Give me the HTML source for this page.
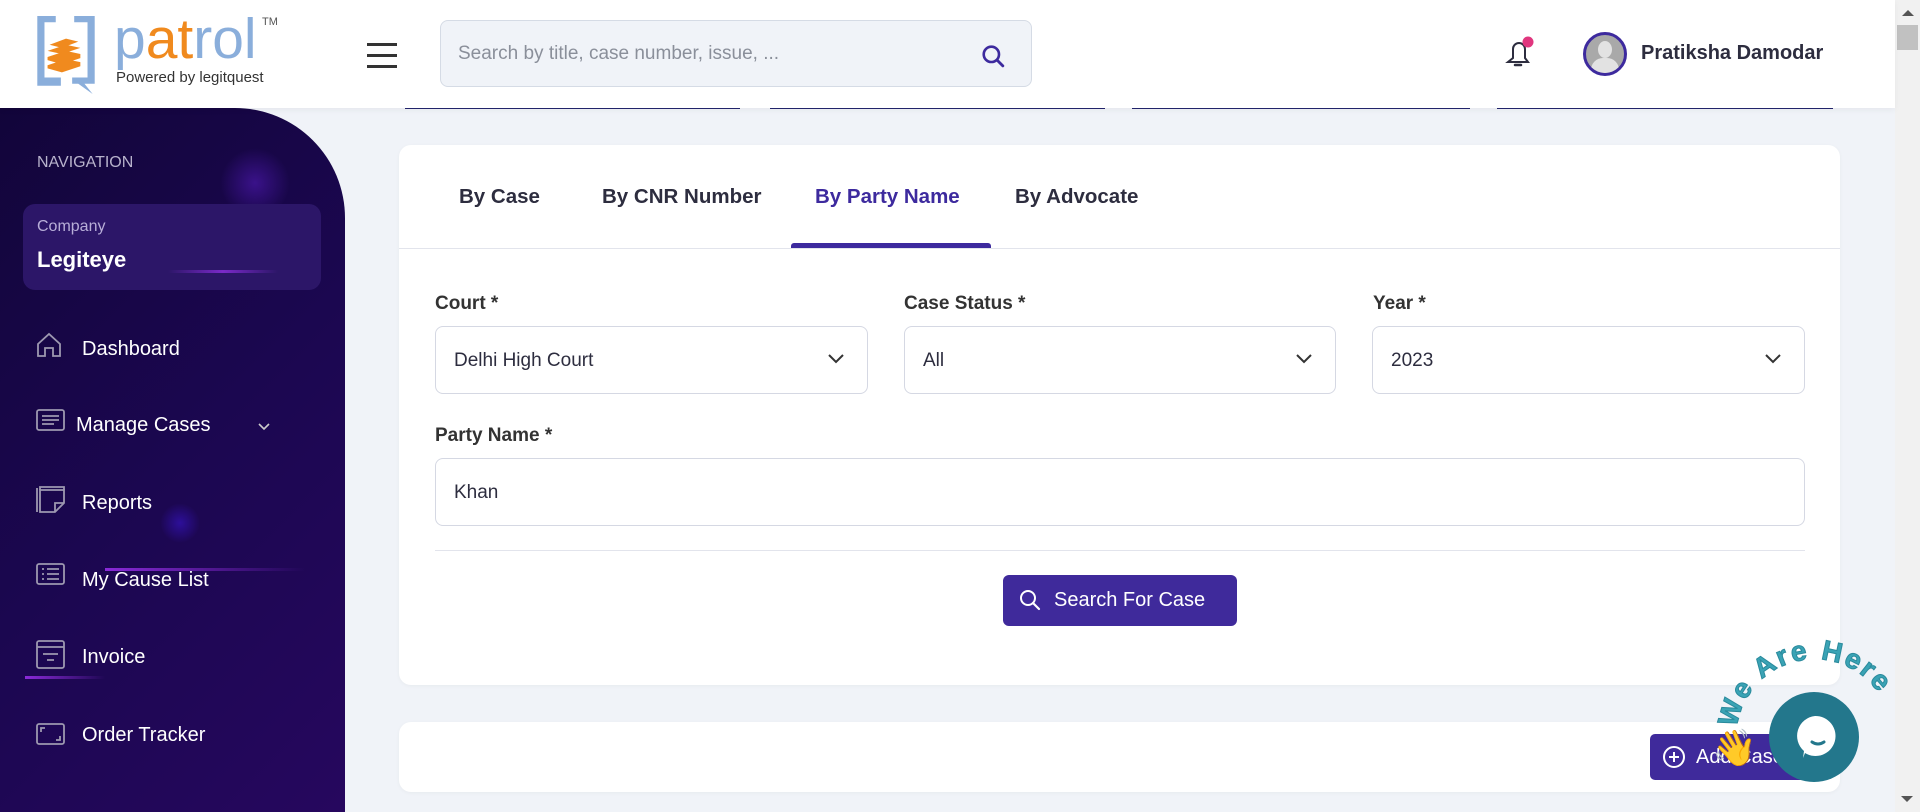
<!DOCTYPE html>
<html><head><meta charset="utf-8">
<style>
*{box-sizing:border-box;margin:0;padding:0}
body{width:1920px;height:812px;overflow:hidden;background:#f0f3f8;font-family:"Liberation Sans",sans-serif;position:relative;color:#2d2d3f}
.abs{position:absolute}
#hdr{left:0;top:0;width:1895px;height:108px;background:#fff;box-shadow:0 2px 6px rgba(0,0,0,.05);z-index:3}
#sb{left:0;top:108px;width:345px;height:704px;border-top-right-radius:110px;background:linear-gradient(135deg,#12053a 0%,#1b0750 50%,#26075e 100%);overflow:hidden}
.nav{position:absolute;left:82px;font-size:20px;color:#fff;font-weight:500}
.ico{position:absolute;left:36px}
.card{position:absolute;background:#fff;border-radius:12px;box-shadow:0 1px 4px rgba(0,0,0,.04)}
.tab{position:absolute;top:185px;font-size:20.5px;font-weight:700;color:#2d2d3f}
.lbl{position:absolute;font-size:19px;font-weight:700;color:#333}
.fld{position:absolute;height:68px;border:1px solid #d5d8e3;border-radius:8px;background:#fff;font-size:19px;color:#2d2d3f;padding:23px 0 0 18px}
.chev{position:absolute;right:22px;top:26px}
</style></head><body>

<div id="hdr" class="abs">
  <svg class="abs" style="left:33px;top:14px" width="66" height="82" viewBox="0 0 60 80">
    <path d="M2 2h18v6H9v54h16v8H2z" fill="#8aaedb"/>
    <path d="M38 2h20v66H48l8 10-14-10H36v-6h15V8H38z" fill="#8aaedb"/>
    <g fill="#f08a1e"><path d="M12 36l18-6 14 3-18 6z"/><path d="M12 42l18-6 14 3v4l-18 6-14-4z"/><path d="M12 50l18-6 14 3v4l-18 6-14-4z"/><path d="M14 30l16-6 12 3-16 6z"/></g>
  </svg>
  <div class="abs" style="left:114px;top:6px;font-size:57px;color:#8aaedb;line-height:66px"><span>p</span><span style="color:#f08a1e">at</span>rol</div>
  <div class="abs" style="left:262px;top:16px;font-size:11px;color:#555">TM</div>
  <div class="abs" style="left:116px;top:69px;font-size:15px;color:#333">Powered by legitquest</div>
  <div class="abs" style="left:367px;top:43px;width:30px;height:3px;background:#333;box-shadow:0 11px 0 #333,0 22px 0 #333"></div>
  <div class="abs" style="left:440px;top:20px;width:592px;height:67px;background:#f0f3f8;border:1px solid #d5dbe5;border-radius:8px">
    <div class="abs" style="left:17px;top:22px;font-size:19px;color:#8a8f9a">Search by title, case number, issue, ...</div>
    <svg class="abs" style="left:540px;top:23px" width="24" height="24" viewBox="0 0 22 22"><circle cx="9.5" cy="9.5" r="7" fill="none" stroke="#3d2a9e" stroke-width="2.4"/><path d="M15 15l5 5" stroke="#3d2a9e" stroke-width="2.6" stroke-linecap="round"/></svg>
  </div>
  <svg class="abs" style="left:1504px;top:36px" width="32" height="34" viewBox="0 0 32 34"><path d="M4 26h20l-3-4v-9a6 6 0 0 0-12 0v9z" fill="none" stroke="#2d2d3f" stroke-width="2"/><path d="M11 29h6" stroke="#2d2d3f" stroke-width="2.5" stroke-linecap="round"/><circle cx="24" cy="6" r="5.5" fill="#e0367e"/></svg>
  <div class="abs" style="left:1583px;top:32px;width:44px;height:44px;border-radius:50%;border:3px solid #3d2a9e;background:#a9a9a9;overflow:hidden">
    <div class="abs" style="left:12px;top:6px;width:14px;height:17px;border-radius:50%;background:#e2e2e2"></div>
    <div class="abs" style="left:5px;top:23px;width:28px;height:20px;border-radius:12px 12px 0 0;background:#e2e2e2"></div>
  </div>
  <div class="abs" style="left:1641px;top:42px;font-size:20px;font-weight:700;color:#2d2d3f">Pratiksha Damodar</div>
</div>
<div class="abs" style="left:1895px;top:0;width:25px;height:812px;background:#f1f1f1"></div>
<div class="abs" style="left:1902px;top:10px;border:6px solid transparent;border-bottom:6px solid #555;border-top:0;width:0;height:0"></div>
<div class="abs" style="left:1897px;top:25px;width:21px;height:25px;background:#c1c1c1"></div>
<div class="abs" style="left:1901px;top:796px;border:6px solid transparent;border-top:6px solid #555;border-bottom:0;width:0;height:0"></div>

<div class="abs" style="left:405px;top:107px;width:335px;height:2px;background:#23256e"></div>
<div class="abs" style="left:770px;top:107px;width:335px;height:2px;background:#23256e"></div>
<div class="abs" style="left:1132px;top:107px;width:338px;height:2px;background:#23256e"></div>
<div class="abs" style="left:1497px;top:107px;width:336px;height:2px;background:#23256e"></div>

<div id="sb" class="abs">
  <div class="abs" style="left:220px;top:40px;width:70px;height:70px;border-radius:50%;background:radial-gradient(#3a128a,transparent 70%)"></div>
  <div class="abs" style="left:160px;top:395px;width:40px;height:40px;border-radius:50%;background:radial-gradient(#2d0f9a,transparent 70%)"></div>
  <div class="abs" style="left:105px;top:460px;width:200px;height:3px;background:linear-gradient(90deg,#8a2ad8,transparent)"></div>
  <div class="abs" style="left:25px;top:568px;width:80px;height:3px;background:linear-gradient(90deg,#8a2ad8,transparent)"></div>
  <div class="abs" style="left:37px;top:46px;font-size:16px;color:#b8b3cc">NAVIGATION</div>
  <div class="abs" style="left:23px;top:96px;width:298px;height:86px;border-radius:12px;background:#2c1668">
    <div class="abs" style="left:145px;top:66px;width:110px;height:3px;background:linear-gradient(90deg,transparent,#7a2ac8,transparent)"></div>
    <div class="abs" style="left:14px;top:14px;font-size:16px;color:#b8aed8">Company</div>
    <div class="abs" style="left:14px;top:43px;font-size:22px;font-weight:700;color:#fff">Legiteye</div>
  </div>
  <svg class="ico" style="top:224px" width="26" height="26" viewBox="0 0 26 26" fill="none" stroke="#9d98b0" stroke-width="1.8"><path d="M2 12L13 2l11 10v12h-7v-8H9v8H2z"/></svg>
  <div class="nav" style="top:230px">Dashboard</div>
  <svg class="ico" style="top:301px" width="30" height="24" viewBox="0 0 30 24" fill="none" stroke="#9d98b0" stroke-width="1.8"><rect x="1" y="1" width="27" height="20" rx="2"/><path d="M6 7h17M6 11h17M6 15h12"/></svg>
  <div class="nav" style="left:76px;top:306px">Manage Cases</div>
  <svg class="abs" style="left:257px;top:314px" width="14" height="10" viewBox="0 0 14 10"><path d="M2 2l5 5 5-5" fill="none" stroke="#ccc" stroke-width="1.6"/></svg>
  <svg class="ico" style="top:377px" width="30" height="30" viewBox="0 0 30 30" fill="none" stroke="#9d98b0" stroke-width="1.8"><path d="M4 5V2h24v3"/><path d="M1 3v24M4 5h24v13l-9 9H4z"/><path d="M19 27v-9h9"/></svg>
  <div class="nav" style="top:384px">Reports</div>
  <svg class="ico" style="top:455px" width="30" height="24" viewBox="0 0 30 24" fill="none" stroke="#9d98b0" stroke-width="1.8"><rect x="1" y="1" width="27" height="20" rx="2"/><path d="M6 6h2M11 6h12M6 11h2M11 11h12M6 16h2M11 16h12"/></svg>
  <div class="nav" style="top:461px">My Cause List</div>
  <svg class="ico" style="top:532px" width="30" height="30" viewBox="0 0 30 30" fill="none" stroke="#9d98b0" stroke-width="1.8"><rect x="1" y="1" width="27" height="27" rx="2"/><path d="M1 7h27M7 14h15M11 20h7"/></svg>
  <div class="nav" style="top:538px">Invoice</div>
  <svg class="ico" style="top:615px" width="30" height="24" viewBox="0 0 30 24" fill="none" stroke="#9d98b0" stroke-width="1.8"><rect x="1" y="1" width="27" height="20" rx="2"/><path d="M5 9V5h4M24 13v4h-4"/></svg>
  <div class="nav" style="top:616px">Order Tracker</div>
</div>

<div class="card" style="left:399px;top:145px;width:1441px;height:540px"></div>
<div class="tab" style="left:459px">By Case</div>
<div class="tab" style="left:602px">By CNR Number</div>
<div class="tab" style="left:815px;color:#3d2a9e">By Party Name</div>
<div class="tab" style="left:1015px">By Advocate</div>
<div class="abs" style="left:791px;top:243px;width:200px;height:5px;border-radius:3px 3px 0 0;background:#3d2a9e"></div>
<div class="abs" style="left:399px;top:248px;width:1441px;height:1px;background:#e2e4ec"></div>

<div class="lbl" style="left:435px;top:293px">Court *</div>
<div class="lbl" style="left:904px;top:293px">Case Status *</div>
<div class="lbl" style="left:1373px;top:293px">Year *</div>
<div class="fld" style="left:435px;top:326px;width:433px">Delhi High Court<svg class="chev" width="18" height="12" viewBox="0 0 18 12"><path d="M2 2l7 7 7-7" fill="none" stroke="#333" stroke-width="2"/></svg></div>
<div class="fld" style="left:904px;top:326px;width:432px">All<svg class="chev" width="18" height="12" viewBox="0 0 18 12"><path d="M2 2l7 7 7-7" fill="none" stroke="#333" stroke-width="2"/></svg></div>
<div class="fld" style="left:1372px;top:326px;width:433px">2023<svg class="chev" width="18" height="12" viewBox="0 0 18 12"><path d="M2 2l7 7 7-7" fill="none" stroke="#333" stroke-width="2"/></svg></div>
<div class="lbl" style="left:435px;top:425px">Party Name *</div>
<div class="fld" style="left:435px;top:458px;width:1370px">Khan</div>
<div class="abs" style="left:435px;top:550px;width:1370px;height:1px;background:#e2e4ec"></div>
<div class="abs" style="left:1003px;top:575px;width:234px;height:51px;background:#3f2a9b;border-radius:6px;color:#fff;font-size:20px">
  <svg class="abs" style="left:16px;top:14px" width="22" height="22" viewBox="0 0 22 22"><circle cx="9" cy="9" r="7" fill="none" stroke="#fff" stroke-width="2"/><path d="M14 14l6 6" stroke="#fff" stroke-width="2.2" stroke-linecap="round"/></svg>
  <div class="abs" style="left:51px;top:14px">Search For Case</div>
</div>

<div class="card" style="left:399px;top:722px;width:1441px;height:70px"></div>
<div class="abs" style="left:1650px;top:734px;width:160px;height:46px;background:#3f2a9b;border-radius:5px;color:#fff;font-size:20px">
  <svg class="abs" style="left:12px;top:11px" width="24" height="24" viewBox="0 0 24 24"><circle cx="12" cy="12" r="10" fill="none" stroke="#fff" stroke-width="2"/><path d="M12 7v10M7 12h10" stroke="#fff" stroke-width="2"/></svg>
  <div class="abs" style="left:46px;top:12px">Add Case</div>
</div>
<div class="abs" style="left:1769px;top:692px;width:90px;height:90px;border-radius:50%;background:#23778c">
  <svg class="abs" style="left:23px;top:22px" width="46" height="46" viewBox="0 0 46 46"><path d="M23 2a20 20 0 1 1-10 37l-2 5 1-7A20 20 0 0 1 23 2z" fill="#fff"/><path d="M20 28q6 4 12 0" stroke="#23778c" stroke-width="3" fill="none" stroke-linecap="round"/></svg>
</div>
<svg class="abs" style="left:1680px;top:600px" width="240" height="160" viewBox="0 0 240 160">
  <path id="arc" d="M57 128 A78 78 0 0 1 200 95" fill="none"/>
  <text font-family="Liberation Sans,sans-serif" font-weight="700" font-size="28" fill="#3aa3b5" stroke="#2a8a9c" stroke-width="1" textLength="200"><textPath href="#arc">We Are Here!</textPath></text>
</svg>
<div class="abs" style="left:1712px;top:727px;font-size:36px;color:#f5c518">👋</div>
</body></html>
